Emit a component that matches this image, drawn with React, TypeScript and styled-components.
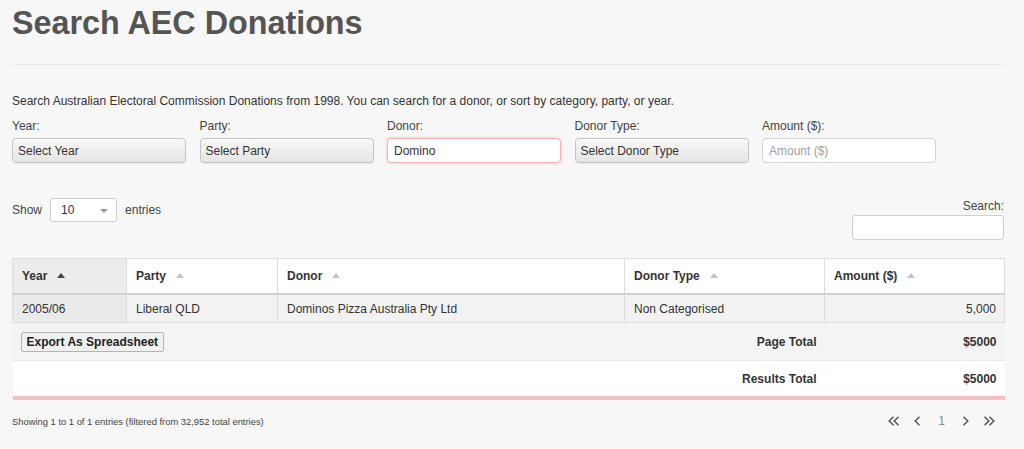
import styled, { createGlobalStyle } from 'styled-components';

const GlobalStyle = createGlobalStyle`
  body {
    margin: 0;
    background: #f7f7f7;
    font-family: "Liberation Sans", Helvetica, Arial, sans-serif;
    color: #333;
  }
`;

const filters = [
  { label: 'Year:', kind: 'select', text: 'Select Year' },
  { label: 'Party:', kind: 'select', text: 'Select Party' },
  { label: 'Donor:', kind: 'focus', text: 'Domino' },
  { label: 'Donor Type:', kind: 'select', text: 'Select Donor Type' },
  { label: 'Amount ($):', kind: 'input', text: 'Amount ($)' },
];

const columns = [
  { title: 'Year', width: 114, sorted: true },
  { title: 'Party', width: 151 },
  { title: 'Donor', width: 347 },
  { title: 'Donor Type', width: 200 },
  { title: 'Amount ($)', width: 180 },
];

const rows = [['2005/06', 'Liberal QLD', 'Dominos Pizza Australia Pty Ltd', 'Non Categorised', '5,000']];

function Chevron({ double, flip }: { double?: boolean; flip?: boolean }) {
  const w = double ? 11 : 6;
  return (
    <svg width={w} height={10} viewBox={`0 0 ${w} 10`} style={{ transform: flip ? 'scaleX(-1)' : undefined }}>
      <polyline points="5.5,0.8 1.2,5 5.5,9.2" fill="none" stroke="#555" strokeWidth="1.5" />
      {double && <polyline points="10.5,0.8 6.2,5 10.5,9.2" fill="none" stroke="#555" strokeWidth="1.5" />}
    </svg>
  );
}

function App() {
  return (
    <Page>
      <GlobalStyle />
      <Title>Search AEC Donations</Title>
      <Rule />
      <Intro>
        Search Australian Electoral Commission Donations from 1998. You can search for a donor, or sort by category,
        party, or year.
      </Intro>

      <Filters>
        {filters.map((f) => (
          <Field key={f.label}>
            <Label>{f.label}</Label>
            {f.kind === 'select' && <SelectBox>{f.text}</SelectBox>}
            {f.kind === 'focus' && <TextInput focused defaultValue={f.text} />}
            {f.kind === 'input' && <TextInput placeholder={f.text} />}
          </Field>
        ))}
      </Filters>

      <Controls>
        <Length>
          Show
          <LengthSelect>
            10
            <Caret />
          </LengthSelect>
          entries
        </Length>
        <SearchBox>
          Search:
          <SearchInput />
        </SearchBox>
      </Controls>

      <Table>
        <colgroup>
          {columns.map((c) => (
            <col key={c.title} style={{ width: c.width }} />
          ))}
        </colgroup>
        <thead>
          <tr>
            {columns.map((c) => (
              <Th key={c.title} sorted={c.sorted}>
                {c.title}
                <SortIcon active={c.sorted} />
              </Th>
            ))}
          </tr>
        </thead>
        <tbody>
          {rows.map((r) => (
            <tr key={r[2]}>
              {r.map((cell, i) => (
                <Td key={i} sorted={i === 0} right={i === 4}>
                  {cell}
                </Td>
              ))}
            </tr>
          ))}
        </tbody>
        <tfoot>
          <FootRow>
            <FootCell colSpan={3}>
              <ExportBtn>Export As Spreadsheet</ExportBtn>
            </FootCell>
            <FootCell right>Page Total</FootCell>
            <FootCell right>$5000</FootCell>
          </FootRow>
          <FootRow white>
            <FootCell colSpan={3} />
            <FootCell right>Results Total</FootCell>
            <FootCell right>$5000</FootCell>
          </FootRow>
        </tfoot>
      </Table>

      <Bottom>
        <Info>Showing 1 to 1 of 1 entries (filtered from 32,952 total entries)</Info>
        <Pager>
          <Chevron double />
          <Chevron />
          <PageNum>1</PageNum>
          <Chevron flip />
          <Chevron double flip />
        </Pager>
      </Bottom>
    </Page>
  );
}

export default App;

const Page = styled.div`
  width: 992px;
  padding: 0 20px 0 12px;
`;

const Title = styled.h1`
  margin: 6px 0 0;
  font-size: 32.3px;
  line-height: 35px;
  font-weight: bold;
  color: #555;
`;

const Rule = styled.hr`
  margin: 23px 0 0;
  border: 0;
  border-top: 1px solid #e8e8e8;
`;

const Intro = styled.p`
  margin: 29px 0 0;
  font-size: 12px;
  line-height: 14px;
  color: #333;
`;

const Filters = styled.div`
  display: grid;
  grid-template-columns: repeat(5, 174px);
  column-gap: 13.5px;
  margin-top: 11px;
`;

const Field = styled.div`
  display: flex;
  flex-direction: column;
  gap: 5px;
`;

const Label = styled.label`
  font-size: 12px;
  line-height: 14px;
  color: #444;
`;

const SelectBox = styled.div`
  box-sizing: border-box;
  height: 25px;
  display: flex;
  align-items: center;
  padding: 0 5px;
  font-size: 12px;
  color: #333;
  border: 1px solid #c4c4c4;
  border-radius: 4px;
  background: linear-gradient(#f8f8f8, #e5e5e5);
  box-shadow: 0 1px 1px rgba(0, 0, 0, 0.06);
`;

const TextInput = styled.input<{ focused?: boolean }>`
  box-sizing: border-box;
  width: 100%;
  height: 25px;
  margin: 0;
  padding: 0 6px;
  font-family: inherit;
  font-size: 12px;
  color: #333;
  background: #fff;
  border: 1px solid ${({ focused }) => (focused ? '#f0b4b4' : '#d4d4d4')};
  border-radius: 4px;
  box-shadow: ${({ focused }) => (focused ? '0 0 3px rgba(235, 120, 120, 0.45)' : 'none')};
  outline: none;

  &::placeholder {
    color: #a0a0a0;
  }
`;

const Controls = styled.div`
  display: flex;
  justify-content: space-between;
  align-items: flex-start;
  margin-top: 35px;
`;

const Length = styled.div`
  display: flex;
  align-items: center;
  gap: 8px;
  font-size: 12px;
  color: #444;
`;

const LengthSelect = styled.div`
  position: relative;
  box-sizing: border-box;
  width: 67px;
  height: 24px;
  display: flex;
  align-items: center;
  padding-left: 10px;
  font-size: 12px;
  color: #333;
  background: #fff;
  border: 1px solid #d0d0d0;
  border-radius: 3px;
`;

const Caret = styled.span`
  position: absolute;
  right: 8px;
  top: 10px;
  border-left: 4px solid transparent;
  border-right: 4px solid transparent;
  border-top: 4px solid #999;
`;

const SearchBox = styled.label`
  display: flex;
  flex-direction: column;
  align-items: flex-end;
  gap: 2px;
  font-size: 12px;
  line-height: 14px;
  color: #444;
  margin-top: 1px;
`;

const SearchInput = styled.input`
  box-sizing: border-box;
  width: 152px;
  height: 25px;
  margin: 0;
  background: #fff;
  border: 1px solid #d0d0d0;
  border-radius: 3px;
  outline: none;
`;

const Table = styled.table`
  width: 992px;
  margin-top: 18px;
  border-collapse: collapse;
  table-layout: fixed;
  font-size: 12px;
`;

const Th = styled.th<{ sorted?: boolean }>`
  text-align: left;
  font-weight: bold;
  line-height: 14px;
  padding: 10px 9px;
  color: #333;
  background: ${({ sorted }) => (sorted ? '#ececec' : '#fff')};
  border: 1px solid #dcdcdc;
  border-bottom: 2px solid #d2d2d2;
`;

const SortIcon = styled.span<{ active?: boolean }>`
  display: inline-block;
  margin-left: 10px;
  vertical-align: 2px;
  border-left: 4px solid transparent;
  border-right: 4px solid transparent;
  border-bottom: 5px solid ${({ active }) => (active ? '#444' : '#c4c4c4')};
`;

const Td = styled.td<{ sorted?: boolean; right?: boolean }>`
  line-height: 14px;
  padding: 7px 8px 6px 9px;
  color: #333;
  text-align: ${({ right }) => (right ? 'right' : 'left')};
  background: ${({ sorted }) => (sorted ? '#eaeaea' : '#f2f2f2')};
  border: 1px solid #dcdcdc;
`;

const FootRow = styled.tr<{ white?: boolean }>`
  background: ${({ white }) => (white ? '#fff' : '#f4f4f4')};
  border-top: 1px solid #eaeaea;

  & > td {
    height: ${({ white }) => (white ? '19px' : '21px')};
  }

  &:last-child {
    border-bottom: 4px solid #f3c1c3;
  }
`;

const FootCell = styled.td<{ right?: boolean }>`
  padding: 8px;
  line-height: 14px;
  font-weight: bold;
  color: #333;
  text-align: ${({ right }) => (right ? 'right' : 'left')};
`;

const ExportBtn = styled.button`
  box-sizing: border-box;
  height: 20px;
  padding: 0 5px;
  font-family: inherit;
  font-size: 12px;
  font-weight: bold;
  color: #222;
  background: #f0f0f0;
  border: 1px solid #b4b4b4;
  border-radius: 2px;
`;

const Bottom = styled.div`
  display: flex;
  justify-content: space-between;
  align-items: center;
  margin-top: 14px;
`;

const Info = styled.div`
  font-size: 9.4px;
  color: #444;
`;

const Pager = styled.div`
  display: flex;
  align-items: center;
  gap: 15px;
  margin-right: 9px;
`;

const PageNum = styled.span`
  font-size: 12px;
  color: #888;
  padding: 0 3px;
`;
